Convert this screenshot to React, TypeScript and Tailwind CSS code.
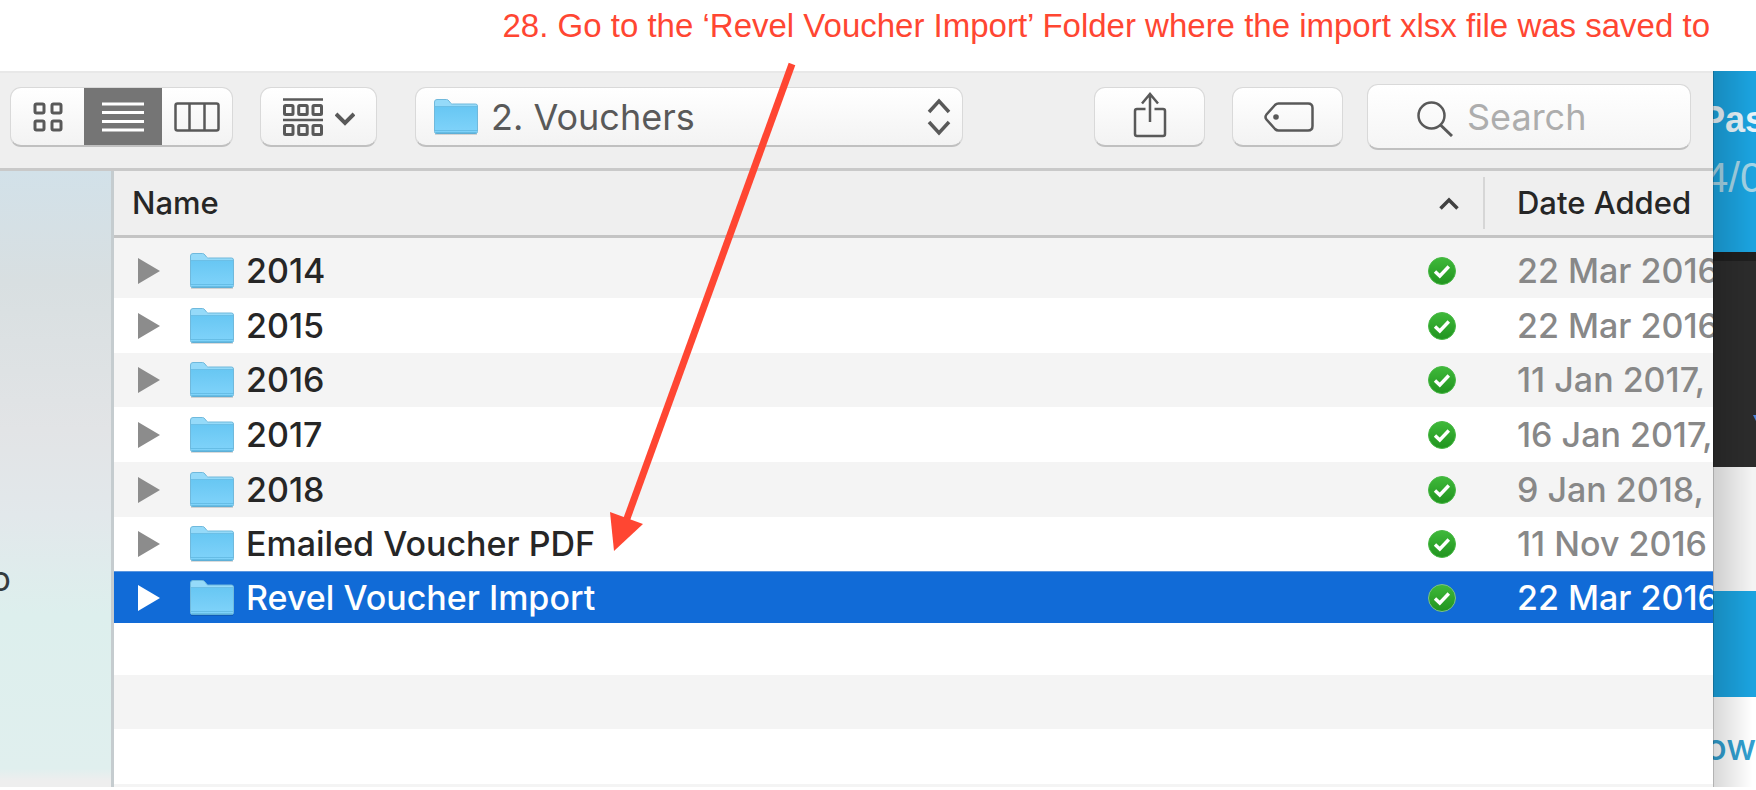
import type { ReactNode } from 'react';

const rows = [
  { name: '2014', date: '22 Mar 2016', height: 'h-[60px] pt-[5px]' },
  { name: '2015', date: '22 Mar 2016', height: 'h-[55px]' },
  { name: '2016', date: '11 Jan 2017,', height: 'h-[54px]' },
  { name: '2017', date: '16 Jan 2017,', height: 'h-[55px]' },
  { name: '2018', date: '9 Jan 2018,', height: 'h-[55px]' },
  { name: 'Emailed Voucher PDF', date: '11 Nov 2016', height: 'h-[54px]' },
  { name: 'Revel Voucher Import', date: '22 Mar 2016', height: 'h-[52px]', selected: true },
];

function FolderIcon({ className }: { className: string }) {
  return (
    <svg viewBox="0 0 44 36" className={className} aria-hidden="true">
      <defs>
        <linearGradient id="folder" x1="0" y1="0" x2="0" y2="1">
          <stop offset="0" stopColor="#68c7f3" />
          <stop offset="1" stopColor="#80d3fa" />
        </linearGradient>
      </defs>
      <path d="M1 34.5h42v1.5H1z" fill="#000" opacity="0.14" />
      <path d="M.5 3Q.5.5 3 .5h9.500q1.500 0 2.500 1.500l1.500 2q.800 1 2 1H41.500q2 0 2 2V32.500q0 2-2 2H2.500q-2 0-2-2z" fill="#95daf9" stroke="#70b9dc" />
      <path d="M1 8h42v24.500q0 1.500-1.500 1.500h-39Q1 34 1 32.500z" fill="url(#folder)" />
      <path d="M1 7.500h42M1 31.500h42" stroke="#5cb5de" strokeWidth="1" opacity="0.7" />
      <path d="M1.500 34h41" stroke="#4fa6cf" strokeWidth="1" />
    </svg>
  );
}

function SyncedIcon({ selected }: { selected?: boolean }) {
  return (
    <svg viewBox="0 0 28 28" className="size-7" role="img" aria-label="Synced">
      <defs>
        <linearGradient id="synced" x1="0" y1="0" x2="0" y2="1">
          <stop offset="0" stopColor="#3fb93a" />
          <stop offset="1" stopColor="#21941f" />
        </linearGradient>
      </defs>
      <circle cx="14" cy="14" r="13.500" fill="url(#synced)" stroke={selected ? '#7cc08a' : '#49b846'} strokeWidth="1" />
      <path d="M7 14.500l4.800 4.500 9-9.500" fill="none" stroke="#fff" strokeWidth="3.400" />
    </svg>
  );
}

function ToolbarButton({ label, className, children }: { label: string; className: string; children: ReactNode }) {
  return (
    <button
      type="button"
      aria-label={label}
      className={`flex h-[60px] shrink-0 items-center justify-center rounded-[11px] border border-[#d9d9d9] border-b-2 border-b-[#c0c0c0] bg-gradient-to-b from-white to-[#f3f3f3] text-[#595959] ${className}`}
    >
      {children}
    </button>
  );
}

function Toolbar() {
  return (
    <div className="flex h-[100px] items-center border-t-2 border-b-[3px] border-t-[#e8e8e8] border-b-[#c9c9c9] bg-[#efefef] pr-[22px] pb-[7px] pl-[10px]">
      <div className="flex h-[60px] w-[223px] shrink-0 overflow-hidden rounded-[11px] border border-[#d9d9d9] border-b-2 border-b-[#c0c0c0] bg-gradient-to-b from-white to-[#f3f3f3] text-[#595959]">
        <button type="button" aria-label="Icon view" className="flex w-[73px] items-center justify-center">
          <svg viewBox="0 0 30 30" className="size-[30px]" fill="none" stroke="currentColor" strokeWidth="3">
            <rect x="2" y="2" width="9" height="9" rx="1.500" />
            <rect x="19" y="2" width="9" height="9" rx="1.500" />
            <rect x="2" y="19" width="9" height="9" rx="1.500" />
            <rect x="19" y="19" width="9" height="9" rx="1.500" />
          </svg>
        </button>
        <button type="button" aria-label="List view" className="flex w-[78px] items-center justify-center bg-[#757575]">
          <svg viewBox="0 0 42 30" className="h-[30px] w-[42px]" stroke="#fff" strokeWidth="3">
            <path d="M0 2h42M0 10.500h42M0 19.500h42M0 28h42" />
          </svg>
        </button>
        <button type="button" aria-label="Column view" className="flex flex-1 items-center justify-center">
          <svg viewBox="0 0 46 30" className="h-[30px] w-[46px]" fill="none" stroke="currentColor" strokeWidth="2.500">
            <rect x="1.500" y="1.500" width="43" height="27" rx="2" />
            <path d="M15.500 1.500v27M30.500 1.500v27" />
          </svg>
        </button>
      </div>

      <ToolbarButton label="Group items" className="ml-[27px] w-[117px] gap-3">
        <svg viewBox="0 0 40 38" className="h-[38px] w-10" fill="none" stroke="currentColor" strokeWidth="3">
          <path d="M0 1.500h40M0 22h40" strokeWidth="2.500" />
          <rect x="1.500" y="7.500" width="8.500" height="9" rx="1" />
          <rect x="15.700" y="7.500" width="8.500" height="9" rx="1" />
          <rect x="30" y="7.500" width="8.500" height="9" rx="1" />
          <rect x="1.500" y="27.500" width="8.500" height="9" rx="1" />
          <rect x="15.700" y="27.500" width="8.500" height="9" rx="1" />
          <rect x="30" y="27.500" width="8.500" height="9" rx="1" />
        </svg>
        <svg viewBox="0 0 20 14" className="mt-1 h-[14px] w-5" fill="none" stroke="currentColor" strokeWidth="4">
          <path d="M1 2l9 9 9-9" />
        </svg>
      </ToolbarButton>

      <div className="ml-[38px] flex h-[60px] w-[548px] min-w-0 items-center rounded-[11px] border border-[#d9d9d9] border-b-2 border-b-[#c0c0c0] bg-gradient-to-b from-white to-[#f3f3f3] pr-[11px] pl-[18px] text-[#595959]">
        <FolderIcon className="h-9 w-11 shrink-0" />
        <select aria-label="Folder" className="ml-[13px] min-w-0 flex-1 appearance-none bg-transparent text-[36px] leading-[44px]">
          <option>2. Vouchers</option>
        </select>
        <svg viewBox="0 0 24 40" className="h-10 w-6 shrink-0" fill="none" stroke="currentColor" strokeWidth="3.500">
          <path d="M2 15L12 4l10 11M2 25l10 11 10-11" />
        </svg>
      </div>

      <ToolbarButton label="Share" className="ml-auto w-[111px]">
        <svg viewBox="0 0 34 46" className="mb-[3px] h-[46px] w-[34px]" fill="none" stroke="currentColor" strokeWidth="2.500">
          <path d="M12.500 17H4q-2 0-2 2V42q0 2 2 2H30q2 0 2-2V19q0-2-2-2H21.500" />
          <path d="M17 30V2M9 11.500L17 2l8 9.500" />
        </svg>
      </ToolbarButton>
      <ToolbarButton label="Edit tags" className="ml-[27px] w-[111px]">
        <svg viewBox="0 0 50 30" className="ml-[2px] h-[30px] w-[50px]" fill="none" stroke="currentColor" strokeWidth="2.500">
          <path d="M14.500 1.500H44q4.500 0 4.500 4.500V24q0 4.500-4.500 4.500H14.500Q12.500 28.500 11 27L2.500 17.500Q.500 15 2.500 12.500L11 3Q12.500 1.500 14.500 1.500z" />
          <circle cx="12" cy="15" r="2.800" fill="currentColor" stroke="none" />
        </svg>
      </ToolbarButton>
      <label className="ml-6 flex h-[66px] w-[324px] shrink-0 items-center rounded-[11px] border border-[#d9d9d9] border-b-2 border-b-[#c0c0c0] bg-gradient-to-b from-white to-[#f5f5f5] pr-4 pl-[49px]">
        <svg viewBox="0 0 36 36" className="mt-1 size-9 shrink-0" fill="none" stroke="#595959" strokeWidth="2.500">
          <circle cx="14.500" cy="14.500" r="13" />
          <path d="M23.500 24l11.500 11" strokeWidth="3" />
        </svg>
        <input
          type="search"
          aria-label="Search"
          placeholder="Search"
          className="ml-[14px] w-full min-w-0 bg-transparent text-[36px] leading-[44px] placeholder:text-[#adadad] focus:outline-none"
        />
      </label>
    </div>
  );
}

function FileList() {
  return (
    <div className="min-w-0 flex-1 overflow-hidden border-l-[3px] border-[#c5cccf] bg-white">
      <table className="block w-full text-left">
        <thead className="block">
          <tr className="flex h-[67px] items-center border-b-[3px] border-[#c4c4c4] bg-[#efefef] text-[31px] leading-10 text-[#262626]">
            <th scope="col" aria-sort="ascending" className="flex h-[52px] min-w-0 flex-1 items-center justify-between border-r-2 border-[#d6d6d6] pr-6 pl-[18px] font-medium">
              Name
              <svg viewBox="0 0 20 13" className="h-[13px] w-5" fill="none" stroke="#404040" strokeWidth="3.500" aria-hidden="true">
                <path d="M1.500 11.500L10 3l8.500 8.500" />
              </svg>
            </th>
            <th scope="col" className="w-[228px] shrink-0 pl-8 font-medium whitespace-nowrap">Date Added</th>
          </tr>
        </thead>
        <tbody className="block text-[34px] leading-[42px] font-medium">
          {rows.map((row) => (
            <tr
              key={row.name}
              className={`flex items-center ${row.height} ${row.selected ? 'border-t border-[#5b96df] bg-[#116bd7] text-white' : 'text-[#262626] odd:bg-[#f4f4f4]'}`}
            >
              <td className="flex min-w-0 flex-1 items-center pl-6">
                <button type="button" aria-label={`Expand ${row.name}`} className={row.selected ? 'text-white' : 'text-[#8c8c8c]'}>
                  <svg viewBox="0 0 22 26" className="h-[26px] w-[22px]" fill="currentColor">
                    <path d="M0 0l22 13L0 26z" />
                  </svg>
                </button>
                <FolderIcon className="ml-[30px] h-9 w-11 shrink-0" />
                <span className="ml-3 truncate">{row.name}</span>
              </td>
              <td className="shrink-0">
                <SyncedIcon selected={row.selected} />
              </td>
              <td className={`w-[257px] shrink-0 overflow-hidden pl-[61px] whitespace-nowrap ${row.selected ? 'text-white' : 'text-[#888888]'}`}>
                {row.date}
              </td>
            </tr>
          ))}
        </tbody>
      </table>
      <div className="h-[52px]" />
      <div className="h-[54px] bg-[#f4f4f4]" />
      <div className="h-[55px]" />
      <div className="h-[3px] bg-[#f4f4f4]" />
    </div>
  );
}

function Backdrop() {
  return (
    <aside className="relative flex w-[43px] shrink-0 flex-col overflow-hidden whitespace-nowrap">
      <div className="h-[181px] bg-[#1ba3df] pt-[26px] font-['Liberation_Sans',sans-serif]">
        <p className="-ml-3 text-[36px] leading-[46px] font-bold text-[#e8f4fa]">Pas</p>
        <p className="-ml-2 text-[42px] leading-[70px] text-[#a4d4e6]">4/0</p>
      </div>
      <div className="flex h-[215px] justify-end border-t-[9px] border-[#1f1f1f] bg-[#2c2c2c] pt-[154px]">
        <svg viewBox="0 0 3 6" className="h-[6px] w-[3px]" fill="#4a7fd6" aria-hidden="true">
          <path d="M0 0h3v6z" />
        </svg>
      </div>
      <div className="h-[124px] bg-[#f4f4f4]" />
      <div className="h-[106px] bg-[#1ba3df]" />
      <div className="flex h-[90px] items-center justify-end bg-white pt-[10px] text-[36px] font-medium text-[#319fd0]">ow</div>
      {/* shadow cast by the file window */}
      <div className="absolute inset-y-0 left-0 w-10 border-l border-black/30 bg-gradient-to-r from-black/15 to-transparent" />
    </aside>
  );
}

export default function App() {
  return (
    <main className="relative min-h-screen overflow-hidden bg-white font-['Inter',sans-serif]">
      <h1 className="h-[71px] pt-[6px] pr-[46px] text-right font-['Liberation_Sans',sans-serif] text-[33px] leading-10 whitespace-nowrap text-[#ff4632]">
        28. Go to the ‘Revel Voucher Import’ Folder where the import xlsx file was saved to
      </h1>
      <div className="flex">
        <section className="min-w-0 flex-1">
          <Toolbar />
          <div className="flex">
            <nav className="w-[111px] shrink-0 bg-linear-[to_bottom,#d2e1e9_0%,#d8dfe1_18%,#e2e4e6_42%,#e2e8eb_56%,#ddefed_72%,#e0efee_97%,#eeeeee_99%] pt-[387px] text-[34px] leading-[42px] text-[#333b3e]">
              <a href="#" className="flex w-[11px] justify-end overflow-hidden">o</a>
            </nav>
            <FileList />
          </div>
        </section>
        <Backdrop />
      </div>

      <svg viewBox="0 0 190 492" className="pointer-events-none absolute top-[62px] left-[608px] h-[492px] w-[190px]" aria-hidden="true">
        <path d="M184 2L17 462" stroke="#ff4632" strokeWidth="7" />
        <path d="M2 450l33 12L6 489z" fill="#ff4632" />
      </svg>
    </main>
  );
}
